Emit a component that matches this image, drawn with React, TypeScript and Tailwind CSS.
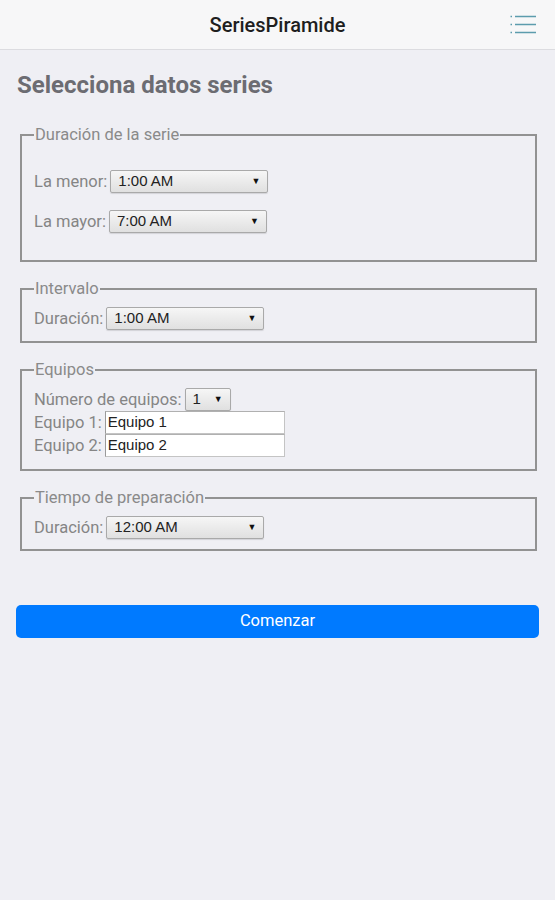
import React from 'react';

const Select: React.FC<{ value: string; width: string }> = ({ value, width }) => (
  <div
    className={`${width} h-[23px] flex items-center justify-between pl-[7px] pr-[7px] border border-[#a9a9a9] rounded-[2px] bg-gradient-to-b from-[#f6f6f6] to-[#e0e0e0] text-[15px] text-[#222] shadow-[0_1px_1px_rgba(0,0,0,0.12)]`}
    style={{ fontFamily: '"Liberation Sans", Arial, sans-serif' }}
  >
    <span>{value}</span>
    <span className="text-[9px] text-[#111]">▼</span>
  </div>
);

const TextBox: React.FC<{ value: string }> = ({ value }) => (
  <div
    className="w-[180px] h-[23px] flex items-center pl-[2px] bg-white border border-[#c4c4c4] border-t-[#b0b0b0] border-l-[#9a9a9a] text-[15px] text-[#222]"
    style={{ fontFamily: '"Liberation Sans", Arial, sans-serif' }}
  >
    {value}
  </div>
);

const Group: React.FC<{ title: string; className?: string; children: React.ReactNode }> = ({ title, className, children }) => (
  <fieldset className={`ml-[4px] mr-[2px] border-2 border-[#929292] px-[12px] ${className ?? ''}`}>
    <legend className="px-[1px] text-[16.5px] leading-[20px] text-[#8a8a8a]">{title}</legend>
    {children}
  </fieldset>
);

const Label: React.FC<{ children: React.ReactNode }> = ({ children }) => (
  <span className="text-[16.5px] leading-[22px] text-[#858585] mr-[3px]">{children}</span>
);

export default function App() {
  return (
    <div className="min-h-[900px] bg-[#efeff4]" style={{ fontFamily: 'Roboto, "Noto Sans", sans-serif' }}>
      {/* Header */}
      <header className="h-[50px] bg-[#f7f7f8] border-b border-[#dcdce0] flex items-center justify-center relative">
        <h1 className="text-[20px] font-medium text-[#1e1e1e]">SeriesPiramide</h1>
        <button className="absolute right-[19px] top-[15px] w-[26px] h-[19px]">
          <svg width="26" height="19" viewBox="0 0 26 19" fill="none" stroke="#5c9cad" strokeWidth="1.5">
            <path d="M0.5 1.5h1.5M0.5 9.5h1.5M0.5 17.5h1.5" />
            <path d="M5 1.5h21M5 9.5h21M5 17.5h21" />
          </svg>
        </button>
      </header>

      <div className="px-4">
        <h2 className="mt-[21px] pl-[1px] text-[24px] leading-[28px] font-bold text-[#6c6c72]">Selecciona datos series</h2>

        <Group title="Duración de la serie" className="mt-[26px] pb-[27px]">
          <div className="mt-[25px] flex items-center">
            <Label>La menor:</Label>
            <Select value="1:00 AM" width="w-[158px]" />
          </div>
          <div className="mt-[17px] flex items-center">
            <Label>La mayor:</Label>
            <Select value="7:00 AM" width="w-[158px]" />
          </div>
        </Group>

        <Group title="Intervalo" className="mt-[17px] pb-[11px]">
          <div className="mt-[8px] flex items-center">
            <Label>Duración:</Label>
            <Select value="1:00 AM" width="w-[158px]" />
          </div>
        </Group>

        <Group title="Equipos" className="mt-[17px] pb-[12px]">
          <div className="mt-[8px] flex items-center">
            <Label>Número de equipos:</Label>
            <Select value="1" width="w-[46px]" />
          </div>
          <div className="flex items-center">
            <Label>Equipo 1:</Label>
            <TextBox value="Equipo 1" />
          </div>
          <div className="flex items-center">
            <Label>Equipo 2:</Label>
            <TextBox value="Equipo 2" />
          </div>
        </Group>

        <Group title="Tiempo de preparación" className="mt-[17px] pb-[10px]">
          <div className="mt-[8px] flex items-center">
            <Label>Duración:</Label>
            <Select value="12:00 AM" width="w-[158px]" />
          </div>
        </Group>

        <button className="mt-[54px] w-full h-[33px] rounded-[5px] bg-[#007aff] text-white text-[16.5px]">Comenzar</button>
      </div>
    </div>
  );
}
